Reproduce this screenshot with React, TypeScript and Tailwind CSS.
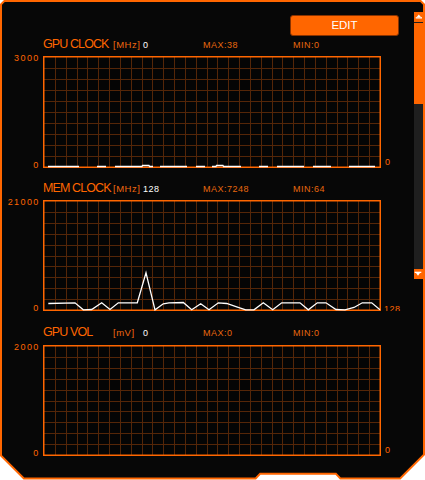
import type { ReactNode } from "react";

type Pt = [number, number];

// chart 1 baseline segments (absolute x, y) as seen on the monitor
const gpuClockSegs: Pt[][] = [
  [[48, 167], [79, 167]],
  [[97, 167], [106, 167]],
  [[115, 167], [142, 167], [142.5, 166], [149, 166], [149.5, 167], [153, 167]],
  [[160, 167], [187, 167]],
  [[196, 167], [205, 167]],
  [[212, 167], [216, 167], [216.5, 166], [223, 166], [223.5, 167], [241, 167]],
  [[259, 167], [268, 167]],
  [[277, 167], [304, 167]],
  [[313, 167], [331, 167]],
  [[349, 167], [375, 167]],
];

const memClockPts: Pt[] = [
  [48.3, 304], [75, 303.3], [83.3, 311], [91.7, 310], [101.7, 303.3], [110, 310],
  [118.3, 303.3], [137.3, 303.3], [146, 273.3], [155, 311], [163.3, 304.3], [169, 303.3],
  [183.3, 303], [191.7, 311], [200.7, 304.3], [209, 311], [218.3, 303.3], [226.7, 304],
  [236.7, 307.3], [245.7, 311], [254, 310.7], [263.3, 303.3], [272.7, 311], [281.7, 303.3],
  [300, 303.3], [308.3, 311], [317.3, 303.3], [326, 303.3], [336, 310], [345, 311],
  [354, 308], [362.3, 303.3], [371.7, 303.3], [380, 311],
];

function Chart({ h, top, lines }: { h: number; top: number; lines: Pt[][] }) {
  const w = 338;
  const cols = Array.from({ length: 30 }, (_, i) => Math.round(1 + ((i + 1) * 336) / 31) + 0.5);
  const rows = Array.from({ length: 9 }, (_, j) => Math.round(1 + ((j + 1) * (h - 2)) / 10) + 0.5);

  return (
    <svg width={w} height={h} className="block shrink-0">
      <rect x={0} y={0} width={w} height={h} fill="#050505" />
      {cols.map((x) => (
        <line key={`c${x}`} x1={x} x2={x} y1={1} y2={h - 1} stroke="#552608" strokeWidth={1} />
      ))}
      {rows.map((y) => (
        <line key={`r${y}`} x1={1} x2={w - 1} y1={y} y2={y} stroke="#552608" strokeWidth={1} />
      ))}
      <rect x={0.75} y={0.75} width={w - 1.5} height={h - 1.5} fill="none" stroke="#ff6600" strokeWidth={1.5} />
      {lines.map((pts, i) => (
        <polyline
          key={i}
          points={pts.map(([x, y]) => `${x - 43},${Math.min(y - top, h - 1.2)}`).join(" ")}
          fill="none"
          stroke="#ffffff"
          strokeWidth={1.3}
        />
      ))}
    </svg>
  );
}

function Header({
  title,
  unit,
  value,
  max,
  min,
  className,
}: {
  title: string;
  unit: string;
  value: string;
  max: string;
  min: string;
  className: string;
}) {
  return (
    <div className={`flex items-baseline whitespace-nowrap pl-[41px] leading-none ${className}`}>
      <span className="w-[70px] shrink-0 text-[12.5px] tracking-[-0.9px] text-[#ff6600]">{title}</span>
      <span className="w-[30px] shrink-0 text-[9.5px] tracking-[0.5px] text-[#f06810]">{unit}</span>
      <span className="w-[60px] shrink-0 text-[9px] tracking-[0.5px] text-white">{value}</span>
      <span className="w-[90px] shrink-0 text-[9px] tracking-[0.5px] text-[#e8670e]">MAX:{max}</span>
      <span className="text-[9px] tracking-[0.5px] text-[#e8670e]">MIN:{min}</span>
    </div>
  );
}

function ChartRow({
  topLabel,
  children,
  right,
}: {
  topLabel: string;
  children: ReactNode;
  right: ReactNode;
}) {
  return (
    <div className="mt-[6.3px] flex">
      <div className="-my-[2px] flex w-[41px] flex-col items-end justify-between pr-[3.3px] text-[9px] leading-none tracking-[1.4px] text-[#ff6600]">
        <span>{topLabel}</span>
        <span>0</span>
      </div>
      {children}
      {right}
    </div>
  );
}

function ScrollArrow({ up }: { up: boolean }) {
  return (
    <div className="h-[10px] bg-[#ff6600]">
      <svg width={9} height={10} className="block">
        {up ? (
          <>
            <polygon points="2.7,4.9 4.8,2.6 6.9,4.9" fill="#ffffff" />
            <rect x={1.7} y={5.2} width={6.3} height={1.3} fill="#ffffff" />
          </>
        ) : (
          <>
            <rect x={0.7} y={2.7} width={6.6} height={1.3} fill="#ffffff" />
            <polygon points="2,4 6,4 4,6.8" fill="#ffffff" />
          </>
        )}
      </svg>
    </div>
  );
}

export default function App() {
  return (
    <div className="h-[480px] w-[425px] bg-white font-['Liberation_Sans',Arial,sans-serif]">
      <div className="h-[480px] w-[425px] bg-[#ff6600] p-[2px] [clip-path:polygon(4px_0,421px_0,425px_4px,425px_455px,400.5px_479.5px,340px_479.5px,335.5px_474.8px,260.5px_474.8px,256px_479.5px,23.5px_479.5px,0_456px,0_4px)]">
        <div className="flex h-full w-full bg-[#070707] [clip-path:polygon(2.8px_0,418.2px_0,421px_2.8px,421px_452.2px,397.7px_475.5px,338.8px_475.5px,334.3px_470.8px,257.7px_470.8px,253.2px_475.5px,22.3px_475.5px,0_453.2px,0_2.8px)]">
          <div className="flex w-[412px] flex-col">
            <button className="ml-[288px] mt-[13px] flex h-[21px] w-[109px] items-center justify-center rounded-[3px] border border-[#8a3300] bg-[#ff6600] text-[11.5px] text-white">
              EDIT
            </button>

            <Header title="GPU CLOCK" unit="[MHz]" value="0" max="38" min="0" className="mt-[1.7px]" />
            <ChartRow
              topLabel="3000"
              right={
                <div className="flex flex-1 flex-col justify-end pb-[1px] pl-[4px] text-[9px] leading-none text-[#ff6600]">
                  0
                </div>
              }
            >
              <Chart h={112} top={56.5} lines={gpuClockSegs} />
            </ChartRow>

            <Header title="MEM CLOCK" unit="[MHz]" value="128" max="7248" min="64" className="mt-[13.2px]" />
            <ChartRow
              topLabel="21000"
              right={
                <div className="flex flex-1 flex-col justify-end overflow-hidden pl-[3px] text-[9px] leading-none tracking-[0.5px] text-[#ff6600]">
                  <span className="-mb-[2.5px]">128</span>
                </div>
              }
            >
              <Chart h={111} top={200.5} lines={[memClockPts]} />
            </ChartRow>

            <Header title="GPU VOL" unit="[mV]" value="0" max="0" min="0" className="mt-[14.6px]" />
            <ChartRow
              topLabel="2000"
              right={
                <div className="flex flex-1 flex-col justify-end pb-[1px] pl-[4px] text-[9px] leading-none text-[#ff6600]">
                  0
                </div>
              }
            >
              <Chart h={111} top={344.9} lines={[]} />
            </ChartRow>
          </div>

          <div className="mt-[10px] flex w-[9px] flex-col self-start">
            <ScrollArrow up />
            <div className="h-[1px] bg-[#1f1f1f]" />
            <div className="h-[81px] bg-[#ff6600]" />
            <div className="h-[165px] bg-[#1f1f1f]" />
            <ScrollArrow up={false} />
          </div>
        </div>
      </div>
    </div>
  );
}
